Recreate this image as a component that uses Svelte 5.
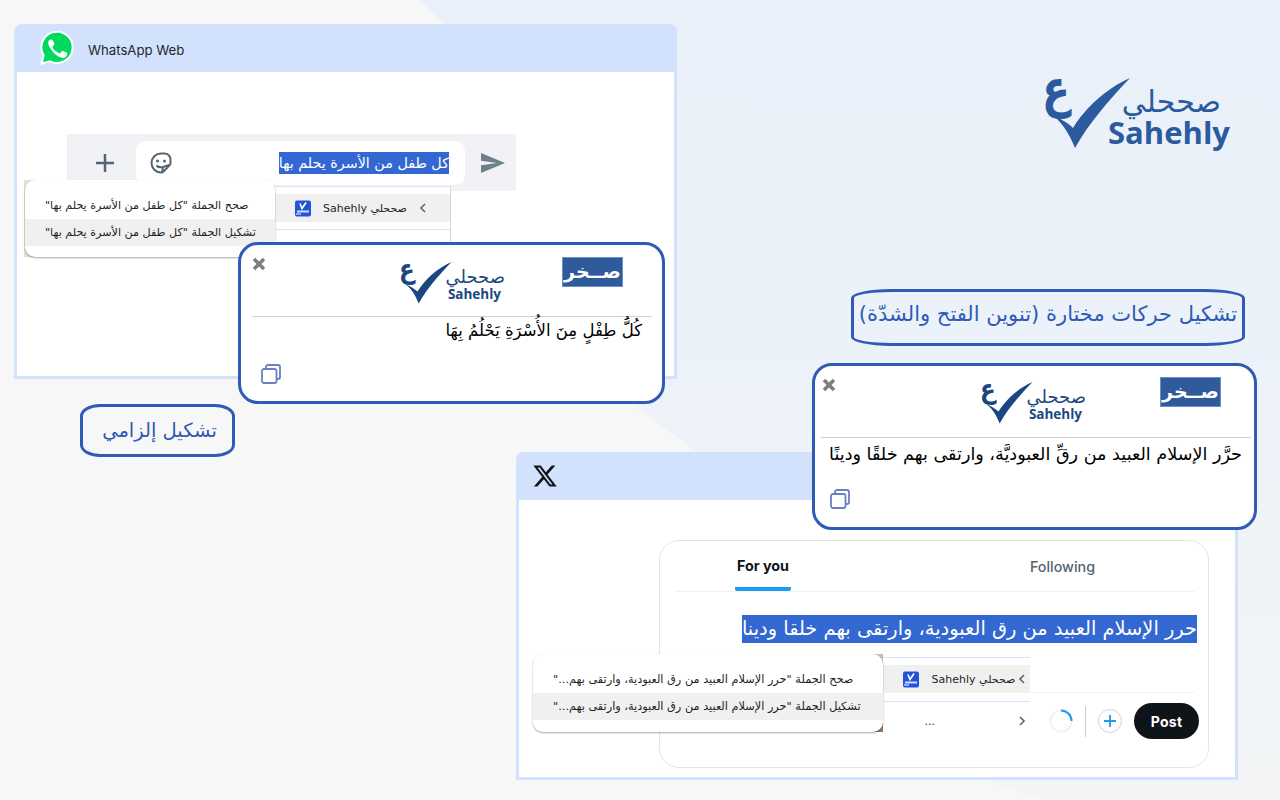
<script lang="ts">
	const waText = 'كل طفل من الأسرة يحلم بها';
	const xText = 'حرر الإسلام العبيد من رق العبودية، وارتقى بهم خلقا ودينا';
	const xShort = 'حرر الإسلام العبيد من رق العبودية، وارتقى بهم...';
</script>

{#snippet logo(cls)}
	<div class="logo {cls}">
		<span class="ain">ع</span>
		<svg class="check" viewBox="0 0 84 71" preserveAspectRatio="none" aria-hidden="true">
			<path d="M2 35C12 40 20 44 26 50C38 30 60 10 83 0C62 22 42 45 28 70C22 55 14 42 2 35Z" />
		</svg>
		<div class="words">
			<span class="ar">صححلي</span>
			<span class="en">Sahehly</span>
		</div>
	</div>
{/snippet}

{#snippet copyIcon()}
	<svg class="copy" viewBox="0 0 20 20" aria-hidden="true">
		<path d="M5 4.500V3a2 2 0 0 1 2-2h10a2 2 0 0 1 2 2v10a2 2 0 0 1-2 2h-1.500" />
		<rect x="1" y="5" width="14.500" height="14" rx="2" />
	</svg>
{/snippet}

{#snippet closeIcon()}
	<svg class="close" viewBox="0 0 14 14" aria-hidden="true">
		<path d="M2 2l10 10M12 2L2 12" />
	</svg>
{/snippet}

{#snippet menuIcon()}
	<svg class="mini" viewBox="0 0 16 16" aria-hidden="true">
		<rect width="16" height="16" rx="2" fill="#2453d6" />
		<path d="M5 3l2 5 4-6" fill="none" stroke="#fff" stroke-width="1.600" />
		<rect x="2" y="10" width="12" height="2" fill="#cfe0ff" />
		<rect x="1" y="13" width="5" height="1" fill="#fff" />
	</svg>
{/snippet}

{#snippet chevron(cls)}
	<svg class="chev {cls}" viewBox="0 0 8 12" aria-hidden="true"><path d={cls === 'left' ? 'M6 2L2 6l4 4' : 'M2 2l4 4-4 4'} /></svg>
{/snippet}

<main class="canvas">
	<div class="wash"></div>

	<section class="window wa">
		<header>
			<svg class="wa-logo" viewBox="0 0 34 34" aria-hidden="true">
				<path d="M1.500 32.500l2.200-8A15.600 15.600 0 1 1 10 30.300z" fill="#00d95f" stroke="#fff" stroke-width="2" />
				<path d="M12.600 9.300c-.4-.9-.8-.9-1.700-.9-1 0-2.700 1-2.700 3.500s2.500 5.900 3 6.500c.4.500 3.500 5.600 8.600 7.500 4.200 1.600 5.100 1.300 6-.1.700-.8 1.500-2.300 1.500-3.300 0-.6-.3-.8-.8-1l-3.300-1.600c-.5-.2-.9-.3-1.300.3l-1.500 1.900c-.3.400-.6.400-1.100.2-.5-.3-2.100-.8-4-2.500-1.500-1.300-2.500-2.900-2.800-3.400-.3-.5 0-.8.200-1l1-1.200c.3-.4.400-.7.600-1.100.2-.4.100-.8-.1-1.100z" fill="#fff" />
			</svg>
			<span>WhatsApp Web</span>
		</header>
		<div class="wa-body"></div>
	</section>

	<div class="composer">
		<svg class="plus" viewBox="0 0 20 20" aria-hidden="true"><path d="M10 1v18M1 10h18" /></svg>
		<div class="input">
			<svg class="sticker" viewBox="0 0 24 24" aria-hidden="true">
				<path d="M12 2.500h3.500a6 6 0 0 1 6 6V12c0 1-.4 1.800-1 2.400l-6 6.100c-.6.600-1.400 1-2.500 1a9.500 9.500 0 0 1 0-19z" fill="none" stroke="#54656f" stroke-width="2" />
				<circle cx="8.500" cy="10" r="1.500" fill="#54656f" />
				<circle cx="15.500" cy="10" r="1.500" fill="#54656f" />
				<path d="M7.500 14.500c1.500 1.800 4 2.200 6.500 1.500l-.8 5M14 16l6.500-2" fill="none" stroke="#54656f" stroke-width="2" />
			</svg>
			<span class="selected">{waText}</span>
		</div>
		<svg class="send" viewBox="0 0 24 20" aria-hidden="true"><path d="M0 20l24-10L0 0v7.800L16 10 0 12.200z" /></svg>
	</div>

	<div class="submenu wa-sub">
		<div class="row">
			{@render menuIcon()}
			<span dir="ltr">Sahehly صححلي</span>
			{@render chevron('left')}
		</div>
	</div>
	<div class="backdrop wa-back"></div>
	<div class="menu wa-menu" dir="rtl">
		<div class="item">صحح الجملة "{waText}"</div>
		<div class="item hover">تشكيل الجملة "{waText}"</div>
	</div>

	<section class="result one">
		<div class="result-top">
			{@render closeIcon()}
			{@render logo('small')}
			<div class="sakhr">صــخر</div>
		</div>
		<p dir="rtl">كُلُّ طِفْلٍ مِنَ الأُسْرَةِ يَحْلُمُ بِهَا</p>
		{@render copyIcon()}
	</section>

	<div class="label first" dir="rtl">تشكيل إلزامي</div>
	<div class="label second" dir="rtl">تشكيل حركات مختارة (تنوين الفتح والشدّة)</div>

	<div class="brand">
		{@render logo('large')}
	</div>

	<section class="window x">
		<header>
			<svg class="x-logo" viewBox="0 0 24 24" aria-hidden="true">
				<path d="M18.244 2.250h3.308l-7.227 8.260 8.502 11.240H16.170l-5.214-6.817L4.990 21.750H1.680l7.730-8.835L1.254 2.250H8.080l4.713 6.231zm-1.161 17.520h1.833L7.084 4.126H5.117z" />
			</svg>
		</header>
		<div class="x-body">
			<div class="tweet">
				<div class="tabs">
					<div class="tab active"><span>For you</span></div>
					<div class="tab"><span>Following</span></div>
				</div>
				<div class="tweet-text"><span class="selected" dir="rtl">{xText}</span></div>
				<div class="toolbar">
					<svg class="spinner" viewBox="0 0 24 24" aria-hidden="true">
						<circle cx="12" cy="12" r="10.500" fill="none" stroke="#eff3f4" stroke-width="2" />
						<path d="M12 1.500A10.500 10.500 0 0 1 22.500 12" fill="none" stroke="#1d9bf0" stroke-width="2" />
					</svg>
					<i class="divider"></i>
					<span class="add"><svg viewBox="0 0 12 12" aria-hidden="true"><path d="M6 0v12M0 6h12" /></svg></span>
					<button type="button">Post</button>
				</div>
			</div>
		</div>
	</section>

	<div class="submenu x-sub">
		<div class="row">
			{@render chevron('left')}
			<span dir="ltr">Sahehly صححلي</span>
			{@render menuIcon()}
		</div>
		<div class="more">
			<span>...</span>
			{@render chevron('right')}
		</div>
	</div>
	<div class="backdrop x-back"></div>
	<div class="menu x-menu" dir="rtl">
		<div class="item">صحح الجملة "{xShort}"</div>
		<div class="item hover">تشكيل الجملة "{xShort}"</div>
	</div>

	<section class="result two">
		<div class="result-top">
			{@render closeIcon()}
			{@render logo('small')}
			<div class="sakhr">صــخر</div>
		</div>
		<p dir="rtl">حرَّر الإسلام العبيد من رقِّ العبوديَّة، وارتقى بهم خلقًا ودينًا</p>
		{@render copyIcon()}
	</section>
</main>

<style>
	:global(body) {
		margin: 0;
		background: #f7f7f7;
		font-family: "DejaVu Sans", sans-serif;
	}

	.canvas {
		position: relative;
		width: 1280px;
		height: 800px;
		overflow: hidden;
		background: #f7f7f7;
	}

	.wash {
		position: absolute;
		inset: 0;
		background: linear-gradient(180deg, #e9f0f9 0%, #ecf2f9 45%, #f3f5f6 100%);
		clip-path: polygon(420px 0, 1280px 0, 1280px 800px, 1043px 800px, 985px 780px, 697px 452px, 640px 410px, 480px 60px);
	}

	.window {
		position: absolute;
		display: flex;
		flex-direction: column;
		box-sizing: border-box;
		border-radius: 8px 8px 0 0;
		background: #d2e2fc;
	}

	.window header {
		display: flex;
		flex: none;
		align-items: center;
		height: 48px;
	}

	.wa {
		left: 14px;
		top: 24px;
		width: 663px;
		height: 355px;
		padding: 0 3px 3px;
	}

	.wa header {
		gap: 14px;
		padding-left: 23px;
		font: 13.2px/1 Inter, sans-serif;
		color: #22252d;
	}

	.wa header span {
		padding-top: 6px;
	}

	.wa-logo {
		width: 34px;
		height: 34px;
	}

	.wa-body {
		flex: 1;
		background: #fff;
	}

	.x {
		left: 516px;
		top: 452px;
		width: 722px;
		height: 328px;
		padding: 0 3px 3px;
	}

	.x header {
		padding-left: 13px;
	}

	.x-logo {
		width: 26px;
		height: 26px;
		fill: #0f1419;
	}

	.x-body {
		flex: 1;
		display: flex;
		align-items: flex-start;
		justify-content: flex-end;
		padding: 40px 26px 0 0;
		background: #fff;
	}

	.composer {
		position: absolute;
		left: 67px;
		top: 134px;
		width: 449px;
		height: 57px;
		box-sizing: border-box;
		display: flex;
		align-items: center;
		padding: 0 11px 0 28px;
		background: #f0f2f5;
	}

	.plus {
		width: 20px;
		height: 20px;
		margin-right: 21px;
		fill: none;
		stroke: #54656f;
		stroke-width: 2.500;
	}

	.input {
		width: 329px;
		height: 44px;
		box-sizing: border-box;
		display: flex;
		align-items: center;
		justify-content: space-between;
		padding: 0 16px 0 13px;
		border-radius: 10px;
		background: #fff;
	}

	.sticker {
		width: 24px;
		height: 24px;
	}

	.send {
		width: 24px;
		height: 20px;
		margin-left: 16px;
		fill: #6c7f8a;
	}

	.selected {
		background: #3367d1;
		color: #fff;
		white-space: nowrap;
	}

	.input .selected {
		font-size: 14.300px;
		line-height: 22px;
	}

	.submenu {
		position: absolute;
		box-sizing: border-box;
		background: #fff;
		border-top: 1px solid #d2e2fc;
		font-size: 11px;
		color: #1f1f1f;
		white-space: nowrap;
	}

	.row {
		display: flex;
		align-items: center;
		height: 28px;
		margin-top: 7px;
		background: #f0f0f0;
	}

	.mini {
		width: 16px;
		height: 17px;
		flex: none;
	}

	.chev {
		width: 8px;
		height: 12px;
		flex: none;
		fill: none;
		stroke: #5f6368;
		stroke-width: 1.600;
	}

	.wa-sub {
		left: 275px;
		top: 186px;
		width: 176px;
		height: 56px;
		border-right: 1px solid #d8d8d8;
	}

	.wa-sub::after,
	.x-sub::after {
		content: "";
		display: block;
		height: 1px;
		margin-top: 7px;
		background: #d2e2fc;
	}

	.wa-sub .row {
		gap: 12px;
		padding: 0 25px 0 20px;
	}

	.wa-sub .chev {
		margin-left: auto;
	}

	.x-sub {
		left: 883px;
		top: 657px;
		width: 147px;
		height: 76px;
	}

	.x-sub .row {
		flex-direction: row-reverse;
		padding: 0 4px 0 20px;
		justify-content: space-between;
	}

	.x-sub .row span {
		margin-left: 10px;
	}

	.x-sub::after {
		position: absolute;
		left: 0;
		right: 0;
		top: 43px;
		margin: 0;
	}

	.more {
		display: flex;
		justify-content: flex-end;
		gap: 83px;
		align-items: center;
		height: 24px;
		margin-top: 16px;
		padding-right: 4px;
	}

	.backdrop {
		position: absolute;
	}

	.wa-back {
		left: 24px;
		top: 180px;
		width: 60px;
		height: 77px;
		background: #e2dfd9;
	}

	.x-back {
		left: 740px;
		top: 654px;
		width: 143px;
		height: 78px;
		background: linear-gradient(180deg, #c9bcae, #96755c);
	}

	.menu {
		position: absolute;
		box-sizing: border-box;
		border-radius: 10px;
		padding: 12px 0 10px;
		background: #fff;
		box-shadow: 0 1px 2px rgba(0, 0, 0, 0.35);
		font-size: 11.150px;
		color: #1f1f1f;
		white-space: nowrap;
	}

	.item {
		height: 27px;
		line-height: 27px;
		text-align: left;
		padding-left: 20px;
	}

	.item.hover {
		background: #f0f0f0;
	}

	.wa-menu {
		left: 25px;
		top: 180px;
		width: 250px;
		height: 77px;
	}

	.x-menu {
		left: 533px;
		top: 654px;
		width: 350px;
		height: 78px;
		font-size: 11.300px;
	}

	.result {
		position: absolute;
		box-sizing: border-box;
		display: flex;
		flex-direction: column;
		border: 3px solid #2f5ab5;
		border-radius: 20px;
		background: #fff;
	}

	.result-top {
		display: grid;
		align-items: start;
		border-bottom: 1px solid #cfcfcf;
	}

	.result p {
		margin: 0;
		color: #000;
		line-height: 28px;
		white-space: nowrap;
	}

	.close {
		width: 14px;
		height: 14px;
		fill: none;
		stroke: #7d7d7d;
		stroke-width: 3.500;
	}

	.copy {
		width: 20px;
		height: 20px;
		fill: #fff;
		stroke: #6a80c4;
		stroke-width: 1.800;
	}

	.one {
		left: 238px;
		top: 242px;
		width: 427px;
		height: 162px;
		padding: 12px 10px 0 11px;
	}

	.one .result-top {
		grid-template-columns: 148px 105px 1fr;
		height: 59px;
	}

	.one .sakhr {
		margin-left: 57px;
	}

	.one p {
		padding-right: 10px;
		font-size: 16.500px;
	}

	.one .copy {
		margin: 19px 0 0 9px;
	}

	.two {
		left: 812px;
		top: 363px;
		width: 445px;
		height: 167px;
		padding: 11px 3px 0 6px;
	}

	.two .result-top {
		grid-template-columns: 160px 105px 1fr;
		height: 60px;
	}

	.two .close {
		margin: 1px 0 0 1px;
	}

	.two .sakhr {
		margin-left: 74px;
	}

	.two p {
		padding-right: 9px;
		padding-top: 2px;
		font-size: 17.600px;
	}

	.two .copy {
		margin: 21px 0 0 9px;
	}

	.sakhr {
		width: 61px;
		height: 30px;
		background: #2f5a9c;
		border: 1px solid #6f8fc0;
		box-sizing: border-box;
		color: #fff;
		font-size: 19px;
		font-weight: 700;
		line-height: 26px;
		text-align: center;
		white-space: nowrap;
		overflow: hidden;
	}

	.logo {
		position: relative;
		color: #1a477f;
	}

	.logo.small {
		width: 105px;
		height: 50px;
	}

	.logo.large {
		width: 185px;
		height: 72px;
		color: #2c5a9e;
	}

	.ain {
		position: absolute;
		left: -1px;
		top: -2px;
		font-size: 23px;
		font-weight: 700;
		line-height: 1;
		transform: scaleY(1.2);
		transform-origin: 0 0;
	}

	.check {
		position: absolute;
		left: 2px;
		top: 5px;
		width: 50px;
		height: 42px;
		fill: currentColor;
	}

	.words {
		position: absolute;
		right: 0;
		top: 10px;
		display: flex;
		flex-direction: column;
		align-items: flex-end;
	}

	.words .ar {
		font-size: 18px;
		line-height: 20px;
	}

	.words .en {
		font: 700 13.500px/18px "Open Sans", sans-serif;
		margin-top: -2px;
		margin-right: 4px;
	}

	.large .ain {
		font-size: 41px;
		top: -15px;
		left: -3px;
		transform: scaleY(1.28);
	}

	.large .check {
		left: 2px;
		top: 1px;
		width: 84px;
		height: 71px;
	}

	.large .ar {
		font-size: 30px;
		line-height: 29px;
		margin-right: 9px;
	}

	.large .en {
		font-size: 31px;
		line-height: 30px;
		margin-top: 1px;
		margin-right: 0;
	}

	.brand {
		position: absolute;
		left: 1045px;
		top: 77px;
	}

	.label {
		position: absolute;
		box-sizing: border-box;
		display: flex;
		align-items: center;
		justify-content: center;
		border: 3px solid #2f5ab5;
		color: #2f5ab5;
		white-space: nowrap;
	}

	.first {
		left: 80px;
		top: 404px;
		width: 155px;
		height: 53px;
		padding-left: 4px;
		border-radius: 20px / 12px;
		font-size: 19.500px;
	}

	.second {
		left: 851px;
		top: 289px;
		width: 394px;
		height: 57px;
		padding-bottom: 8px;
		border-radius: 40px / 9px;
		font-size: 21px;
	}

	.tweet {
		width: 550px;
		height: 228px;
		box-sizing: border-box;
		padding: 0 13px 0 15px;
		border: 1px solid #e1e4e8;
		border-radius: 20px;
		font-family: Inter, sans-serif;
	}

	.tabs {
		display: flex;
		justify-content: space-between;
		height: 50px;
		padding: 0 98px 0 60px;
		border-bottom: 1px solid #eff3f4;
		font-size: 14.300px;
		font-weight: 500;
		color: #536471;
	}

	.tab {
		display: flex;
		align-items: center;
		height: 50px;
		box-sizing: border-box;
		padding: 0 2px;
	}

	.tab.active {
		padding-top: 2px;
		font-weight: 700;
		color: #0f1419;
		border-bottom: 4px solid #1d9bf0;
		border-radius: 0 0 2px 2px;
	}

	.tweet-text {
		display: flex;
		justify-content: flex-end;
		box-sizing: border-box;
		margin-top: 23px;
		height: 78px;
		border-bottom: 1px solid #eff3f4;
	}

	.tweet-text .selected {
		font-family: "DejaVu Sans", sans-serif;
		font-size: 19.400px;
		line-height: 28px;
		height: 28px;
		margin-right: -2px;
	}

	.toolbar {
		display: flex;
		align-items: center;
		justify-content: flex-end;
		gap: 12px;
		margin-right: -4px;
		padding-top: 10px;
	}

	.spinner {
		width: 24px;
		height: 24px;
	}

	.divider {
		width: 1px;
		height: 31px;
		background: #c5d0d8;
	}

	.add {
		display: flex;
		align-items: center;
		justify-content: center;
		width: 24px;
		height: 24px;
		box-sizing: border-box;
		border: 1px solid #c9d6df;
		border-radius: 50%;
	}

	.add svg {
		width: 12px;
		height: 12px;
		fill: none;
		stroke: #1d9bf0;
		stroke-width: 1.800;
	}

	button {
		width: 65px;
		height: 36px;
		border: 0;
		border-radius: 18px;
		background: #0f1419;
		color: #fff;
		font: 700 14px Inter, sans-serif;
		letter-spacing: 0.3px;
	}
</style>
